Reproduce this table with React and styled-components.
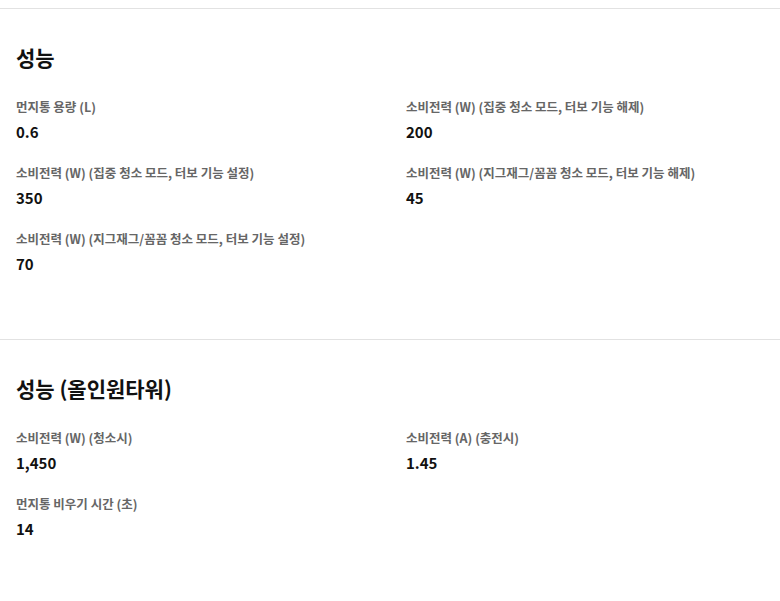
import styled, { createGlobalStyle } from 'styled-components'

const GlobalStyle = createGlobalStyle`
  body {
    margin: 0;
    background: #fff;
    font-family: "Noto Sans CJK KR", "Noto Sans", sans-serif;
  }
`

// styles
const Page = styled.div`
  padding-top: 8px;
`

const Section = styled.section`
  border-top: 1px solid #e2e2e2;
  padding: 32px 16px 64px;
`

const Title = styled.h2`
  margin: 0 0 24px;
  font-size: 21px;
  line-height: 32px;
  font-weight: 700;
  color: #111;
`

const SpecGrid = styled.div`
  display: grid;
  grid-template-columns: 1fr 1fr;
  column-gap: 32px;
  row-gap: 20px;
`

const Spec = styled.div`
  display: flex;
  flex-direction: column;
  gap: 4px;
`

const Label = styled.span`
  font-size: 12.5px;
  line-height: 20px;
  font-weight: 700;
  color: #666;
`

const Value = styled.span`
  font-size: 15px;
  line-height: 22px;
  font-weight: 700;
  color: #111;
`

const sections = [
  {
    title: '성능',
    specs: [
      ['먼지통 용량 (L)', '0.6'],
      ['소비전력 (W) (집중 청소 모드, 터보 기능 해제)', '200'],
      ['소비전력 (W) (집중 청소 모드, 터보 기능 설정)', '350'],
      ['소비전력 (W) (지그재그/꼼꼼 청소 모드, 터보 기능 해제)', '45'],
      ['소비전력 (W) (지그재그/꼼꼼 청소 모드, 터보 기능 설정)', '70'],
    ],
  },
  {
    title: '성능 (올인원타워)',
    specs: [
      ['소비전력 (W) (청소시)', '1,450'],
      ['소비전력 (A) (충전시)', '1.45'],
      ['먼지통 비우기 시간 (초)', '14'],
    ],
  },
]

function App() {
  return (
    <>
      <GlobalStyle />
      <Page>
        {sections.map(section => (
          <Section key={section.title}>
            <Title>{section.title}</Title>
            <SpecGrid>
              {section.specs.map(([label, value]) => (
                <Spec key={label}>
                  <Label>{label}</Label>
                  <Value>{value}</Value>
                </Spec>
              ))}
            </SpecGrid>
          </Section>
        ))}
      </Page>
    </>
  )
}

export default App
